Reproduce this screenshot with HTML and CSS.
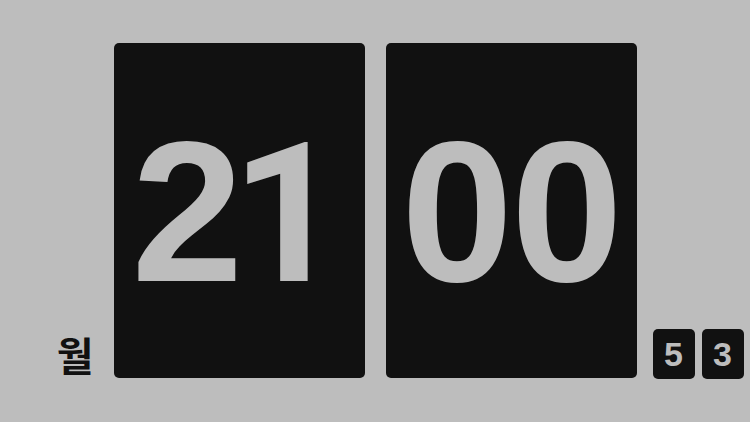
FILE: index.html
```html
<!DOCTYPE html>
<html lang="ko">
<head>
<meta charset="utf-8">
<link rel="stylesheet" href="styles.css">
</head>
<body>
<div class="clock">
  <div class="side left"><span class="day">월</span></div>
  <div class="cards">
    <div class="card card-hours"><span class="digits">2<span class="one">1</span></span></div>
    <div class="card"><span class="digits">00</span></div>
  </div>
  <div class="side right">
    <div class="sec"><span>5</span></div>
    <div class="sec"><span>3</span></div>
  </div>
</div>
</body>
</html>
```
FILE: styles.css
```css
html, body {
  margin: 0;
  padding: 0;
  width: 750px;
  height: 422px;
  background: #bdbdbd;
  overflow: hidden;
}
.clock {
  display: grid;
  grid-template-columns: 1fr auto 1fr;
  align-items: end;
  height: 422px;
  padding-top: 43px;
  padding-bottom: 44px;
  box-sizing: border-box;
}
.side {
  display: flex;
  align-items: flex-end;
}
.left {
  justify-content: flex-end;
  padding-right: 20px;
}
.right {
  justify-content: flex-start;
  padding-left: 16px;
  gap: 7px;
}
.day {
  font-family: "Noto Sans CJK KR", sans-serif;
  font-weight: 700;
  font-size: 40px;
  line-height: 1;
  color: #111;
  margin-bottom: 4px;
}
.cards {
  display: flex;
  gap: 21px;
}
.card {
  width: 251px;
  height: 335px;
  background: #111;
  border-radius: 5px;
  display: flex;
  align-items: center;
  justify-content: center;
}
.card-hours {
  justify-content: flex-start;
  padding-left: 18px;
  box-sizing: border-box;
}
.digits {
  font-family: "Liberation Sans", Arial, sans-serif;
  font-weight: 700;
  font-size: 201px;
  line-height: 1;
  color: #bdbdbd;
  letter-spacing: -2px;
  margin-top: 2px;
}
.one {
  font-family: "Roboto", "Liberation Sans", sans-serif;
  font-size: 195px;
  margin-left: -10px;
}
.sec {
  width: 42px;
  height: 50px;
  background: #111;
  border-radius: 5px;
  display: flex;
  align-items: center;
  justify-content: center;
  margin-bottom: -1px;
}
.sec span {
  font-family: "Liberation Sans", Arial, sans-serif;
  font-weight: 700;
  font-size: 34px;
  line-height: 1;
  color: #bdbdbd;
}
```
